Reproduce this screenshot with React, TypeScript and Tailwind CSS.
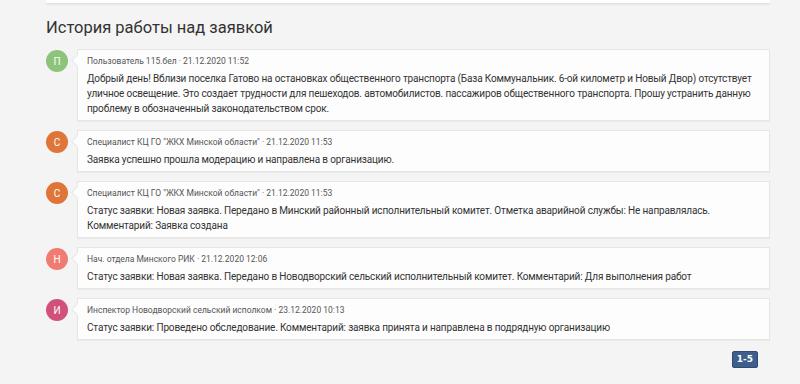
import React from "react";

type Item = { letter: string; color: string; meta: string; body: React.ReactNode };

const items: Item[] = [
  {
    letter: "П",
    color: "bg-[#8cc47a]",
    meta: "Пользователь 115.бел · 21.12.2020 11:52",
    body: "Добрый день! Вблизи поселка Гатово на остановках общественного транспорта (База Коммунальник. 6-ой километр и Новый Двор) отсутствует уличное освещение. Это создает трудности для пешеходов. автомобилистов. пассажиров общественного транспорта. Прошу устранить данную проблему в обозначенный законодательством срок.",
  },
  {
    letter: "С",
    color: "bg-[#df7538]",
    meta: 'Специалист КЦ ГО "ЖКХ Минской области" · 21.12.2020 11:53',
    body: "Заявка успешно прошла модерацию и направлена в организацию.",
  },
  {
    letter: "С",
    color: "bg-[#df7538]",
    meta: 'Специалист КЦ ГО "ЖКХ Минской области" · 21.12.2020 11:53',
    body: "Статус заявки: Новая заявка. Передано в Минский районный исполнительный комитет. Отметка аварийной службы: Не направлялась. Комментарий: Заявка создана",
  },
  {
    letter: "Н",
    color: "bg-[#f07b70]",
    meta: "Нач. отдела Минского РИК · 21.12.2020 12:06",
    body: "Статус заявки: Новая заявка. Передано в Новодворский сельский исполнительный комитет. Комментарий: Для выполнения работ",
  },
  {
    letter: "И",
    color: "bg-[#d1517a]",
    meta: "Инспектор Новодворский сельский исполком · 23.12.2020 10:13",
    body: "Статус заявки: Проведено обследование. Комментарий: заявка принята и направлена в подрядную организацию",
  },
];

export default function App() {
  return (
    <div
      className="w-[800px] h-[384px] overflow-hidden bg-[#f4f4f4] text-[#333]"
      style={{ fontFamily: 'Roboto, "Noto Sans", sans-serif' }}
    >
      <div className="ml-[46px] w-[724px] h-[4px] bg-white border-b border-[#e2e2e2] shadow-[0_1px_2px_rgba(0,0,0,0.06)]" />
      <h2 className="ml-[46px] mt-[12px] text-[16.5px] leading-[24px] text-[#333]">
        История работы над заявкой
      </h2>
      <div className="ml-[46px] mt-[9px] w-[724px] flex flex-col gap-[9px]">
        {items.map((it, i) => (
          <div key={i} className="flex items-start">
            <div
              className={`w-[22px] h-[22px] rounded-full ${it.color} text-white text-[10px] flex items-center justify-center shrink-0 mt-[1px]`}
            >
              {it.letter}
            </div>
            <div className="relative ml-[9px] flex-1 bg-[#fdfdfd] border border-[#e6e6e6] shadow-[0_1px_1px_rgba(0,0,0,0.04)] pl-[9px] pr-[10px] pt-[4px] pb-[4px]">
              <div className="absolute left-[-5px] top-[6px] w-[9px] h-[9px] rotate-45 bg-[#fdfdfd] border-l border-b border-[#e6e6e6]" />
              <div className="text-[8.5px] leading-[14px] text-[#555]">{it.meta}</div>
              <div className="mt-[3px] text-[10px] leading-[15px] tracking-[-0.15px] text-[#333]">{it.body}</div>
            </div>
          </div>
        ))}
      </div>
      <div className="flex justify-end w-[758px] mt-[11px]">
        <div
          className="w-[26px] h-[17px] bg-[#3e5f8d] border border-[#2f4a72] rounded-[2px] text-white text-[9px] font-bold flex items-center justify-center"
          style={{ fontFamily: '"DejaVu Sans", sans-serif' }}
        >
          1-5
        </div>
      </div>
    </div>
  );
}
